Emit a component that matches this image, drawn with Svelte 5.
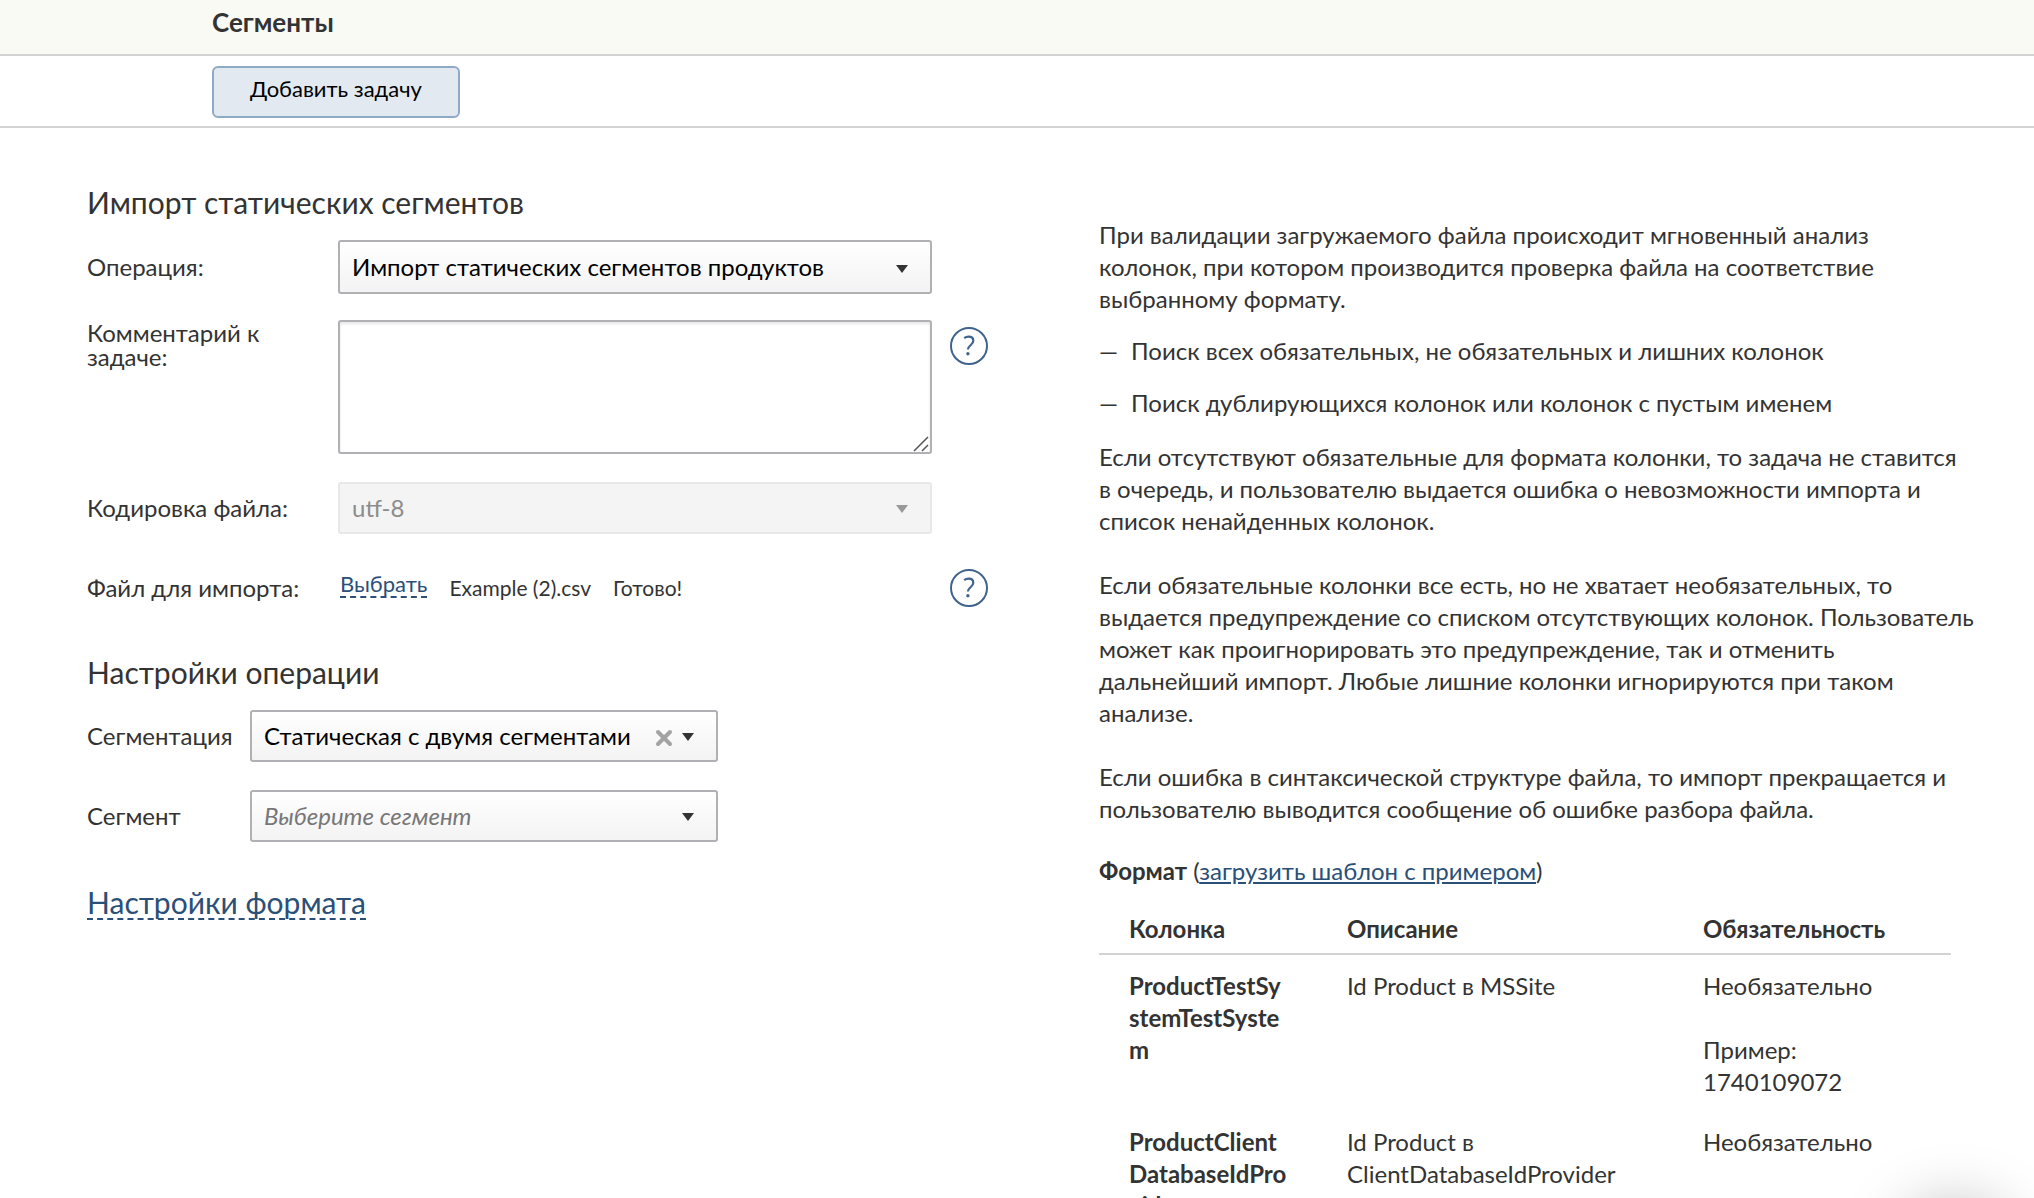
<script>
  let operation = $state('products');
  let comment = $state('');
  let encoding = $state('utf-8');
  let segmentation = $state('static-two');
  let segment = $state('');

  const checks = [
    'Поиск всех обязательных, не обязательных и лишних колонок',
    'Поиск дублирующихся колонок или колонок с пустым именем',
  ];

  const notes = [
    'Если отсутствуют обязательные для формата колонки, то задача не ставится в\u00a0очередь, и пользователю выдается ошибка о невозможности импорта и список ненайденных колонок.',
    'Если обязательные колонки все есть, но не хватает необязательных, то выдается предупреждение со списком отсутствующих колонок. Пользователь может как проигнорировать это предупреждение, так и отменить дальнейший импорт. Любые лишние колонки игнорируются при таком анализе.',
    'Если ошибка в синтаксической структуре файла, то импорт прекращается и пользователю выводится сообщение об ошибке разбора файла.',
  ];

  const columns = [
    {
      name: 'ProductTestSystemTestSystem',
      desc: 'Id Product в MSSite',
      required: 'Необязательно',
      example: '1740109072',
    },
    {
      name: 'ProductClientDatabaseIdProvider',
      desc: 'Id Product в ClientDatabaseIdProvider',
      required: 'Необязательно',
      example: '1740109072',
    },
  ];
</script>

{#snippet arrow()}
  <svg class="arrow" width="12" height="8" viewBox="0 0 12 8" aria-hidden="true">
    <path d="M0 0h12L6 8z" fill="currentColor" />
  </svg>
{/snippet}

{#snippet help(label)}
  <button class="help" type="button" aria-label={label}>
    <svg width="38" height="38" viewBox="0 0 38 38" fill="none" stroke="currentColor">
      <circle cx="19" cy="19" r="18" stroke-width="2" />
      <path d="M14.2 11.2c1.3-1 2.8-1.5 4.4-1.5 3 0 4.7 1.6 4.7 4.1 0 4.3-5.4 4.6-5.4 8.8" stroke-width="2.2" />
      <circle cx="17.9" cy="26.7" r="1.7" fill="currentColor" stroke="none" />
    </svg>
  </button>
{/snippet}

<div class="page">
  <header class="header">
    <h1>Сегменты</h1>
  </header>

  <div class="actions">
    <button class="add" type="button">Добавить задачу</button>
  </div>

  <main class="main">
    <form class="form">
      <h2>Импорт статических сегментов</h2>

      <div class="row row-operation">
        <label for="operation">Операция:</label>
        <div class="select tall">
          <select id="operation" bind:value={operation}>
            <option value="products">Импорт статических сегментов продуктов</option>
          </select>
          {@render arrow()}
        </div>
      </div>

      <div class="row">
        <label class="label-top" for="comment">Комментарий к задаче:</label>
        <div class="area">
          <textarea id="comment" bind:value={comment}></textarea>
          <svg class="grip" width="16" height="16" viewBox="0 0 16 16" aria-hidden="true">
            <path d="M1 15L15 1M9 15l6-6" stroke="#555" stroke-width="1.5" />
          </svg>
        </div>
        <div class="help-top">{@render help('Справка: комментарий')}</div>
      </div>

      <div class="row">
        <label for="encoding">Кодировка файла:</label>
        <div class="select disabled">
          <select id="encoding" bind:value={encoding} disabled>
            <option value="utf-8">utf-8</option>
          </select>
          {@render arrow()}
        </div>
      </div>

      <div class="row row-file">
        <span>Файл для импорта:</span>
        <div class="file">
          <a class="dashed" href="#file">Выбрать</a>
          <span>Example (2).csv</span>
          <span>Готово!</span>
        </div>
        {@render help('Справка: файл')}
      </div>

      <h2 class="second">Настройки операции</h2>

      <div class="row row-segment">
        <label for="segmentation">Сегментация</label>
        <div class="select">
          <select id="segmentation" bind:value={segmentation}>
            <option value="static-two">Статическая с двумя сегментами</option>
          </select>
          <button class="clear" type="button" aria-label="Очистить">
            <svg width="18" height="18" viewBox="0 0 18 18">
              <path d="M3 3l12 12M15 3L3 15" stroke="#a3a3a3" stroke-width="4" stroke-linecap="round" />
            </svg>
          </button>
          {@render arrow()}
        </div>
      </div>

      <div class="row row-segment">
        <label for="segment">Сегмент</label>
        <div class="select">
          <select id="segment" class="placeholder" bind:value={segment}>
            <option value="">Выберите сегмент</option>
          </select>
          {@render arrow()}
        </div>
      </div>

      <div class="format-settings">
        <a class="dashed" href="#format">Настройки формата</a>
      </div>
    </form>

    <section class="info">
      <p>
        При валидации загружаемого файла происходит мгновенный анализ колонок, при котором
        производится проверка файла на соответствие выбранному формату.
      </p>
      <ul>
        {#each checks as check}
          <li>{check}</li>
        {/each}
      </ul>
      <div class="notes">
        {#each notes as note}
          <p>{note}</p>
        {/each}
      </div>

      <p><b>Формат</b> (<a href="#template">загрузить шаблон с примером</a>)</p>

      <table>
        <thead>
          <tr>
            <th class="col-name">Колонка</th>
            <th class="col-desc">Описание</th>
            <th>Обязательность</th>
          </tr>
        </thead>
        <tbody>
          {#each columns as column}
            <tr>
              <td class="name">{column.name}</td>
              <td>{column.desc}</td>
              <td>{column.required}<br /><br />Пример:<br />{column.example}</td>
            </tr>
          {/each}
        </tbody>
      </table>
    </section>
  </main>

  <div class="widget"></div>
</div>

<style>
  :global(body) {
    margin: 0;
    background: #fff;
  }

  .page {
    position: relative;
    height: 100vh;
    overflow: hidden;
    font-family: Lato, 'Noto Sans', sans-serif;
    font-size: 24px;
    line-height: 32px;
    color: #333;
  }

  .page * {
    box-sizing: border-box;
  }

  button,
  select,
  textarea {
    font: inherit;
  }

  .header {
    height: 56px;
    padding: 6px 212px;
    background: #fafaf5;
    border-bottom: 2px solid #d3d3d3;
  }

  h1 {
    margin: 0;
    font-size: 26px;
    font-weight: 700;
    line-height: 32px;
  }

  .actions {
    height: 72px;
    padding: 10px 212px;
    border-bottom: 2px solid #d3d3d3;
  }

  .add {
    display: block;
    height: 52px;
    padding: 0 36px 6px;
    font-size: 22px;
    color: #000;
    background: #e2e9f0;
    border: 2px solid #8faac4;
    border-radius: 6px;
  }

  .main {
    display: grid;
    grid-template-columns: 901fr 852fr;
    gap: 111px;
    padding: 54px 83px 0 87px;
  }

  h2 {
    margin: 0 0 18px;
    font-size: 30px;
    font-weight: 400;
    line-height: 40px;
  }

  .second {
    margin-top: 38px;
  }

  .row {
    display: grid;
    grid-template-columns: 233px 1fr 38px;
    column-gap: 18px;
    align-items: center;
    margin-bottom: 28px;
  }

  .row-operation {
    margin-bottom: 26px;
  }

  .row-segment {
    grid-template-columns: 145px 468px;
  }

  .label-top {
    align-self: start;
    line-height: 24px;
    padding: 1px 50px 0 0;
  }

  .select {
    position: relative;
    height: 52px;
  }

  .tall {
    height: 54px;
  }

  select {
    display: block;
    width: 100%;
    height: 100%;
    padding: 0 60px 0 12px;
    color: #000;
    background: linear-gradient(#fff, #f3f3f3);
    border: 2px solid #b0b0b5;
    border-radius: 3px;
    appearance: none;
  }

  .placeholder {
    color: #777;
    font-style: italic;
  }

  .arrow {
    position: absolute;
    top: 23px;
    right: 24px;
    pointer-events: none;
  }

  .tall .arrow {
    top: 25px;
  }

  .disabled {
    color: #999;
  }

  .disabled select {
    color: #8c8c8c;
    background: #f4f4f4;
    border-color: #e8e8e8;
    opacity: 1;
  }

  .clear {
    position: absolute;
    top: 19px;
    right: 45px;
    display: flex;
    padding: 0;
    background: none;
    border: 0;
  }

  .area {
    position: relative;
  }

  textarea {
    display: block;
    width: 100%;
    height: 134px;
    padding: 8px 12px;
    background: #fff;
    border: 2px solid #b0b0b5;
    border-radius: 3px;
    box-shadow: inset 0 2px 3px rgba(0, 0, 0, 0.1);
    resize: vertical;
  }

  textarea::-webkit-resizer {
    display: none;
  }

  .grip {
    position: absolute;
    right: 3px;
    bottom: 2px;
    pointer-events: none;
  }

  .help {
    display: block;
    padding: 0;
    color: #3f638c;
    background: none;
    border: 0;
  }

  .help svg {
    display: block;
  }

  .help-top {
    align-self: start;
    padding-top: 7px;
  }

  .row-file {
    height: 52px;
  }

  .file {
    display: flex;
    gap: 22px;
    align-items: center;
    padding-left: 2px;
    font-size: 21px;
  }

  a {
    color: #2a5078;
  }

  .dashed {
    text-decoration: none;
    border-bottom: 2px dashed #2a5078;
  }

  .file .dashed {
    margin-bottom: 6px;
    font-size: 22px;
    line-height: 24px;
  }

  .format-settings {
    padding-top: 12px;
    font-size: 30px;
    line-height: 40px;
  }

  .format-settings .dashed {
    display: inline-block;
    line-height: 32px;
  }

  .info {
    padding-top: 37px;
  }

  p {
    margin: 0;
  }

  ul {
    margin: 20px 0 22px;
    padding: 0;
    list-style: none;
  }

  li {
    display: flex;
  }

  li + li {
    margin-top: 20px;
  }

  li::before {
    content: '—';
    width: 32px;
    flex: none;
  }

  .notes {
    display: grid;
    gap: 32px;
    margin: 0 -26px 30px 0;
  }

  table {
    width: 100%;
    margin-top: 26px;
    border-collapse: collapse;
    table-layout: fixed;
  }

  th {
    padding: 0 30px 8px;
    font-weight: 700;
    text-align: left;
    border-bottom: 2px solid #d3d3d3;
  }

  td {
    padding: 15px 30px 13px;
    vertical-align: top;
  }

  .col-name {
    width: 218px;
  }

  .col-desc {
    width: 356px;
  }

  .name {
    font-weight: 700;
    overflow-wrap: break-word;
  }

  .widget {
    position: absolute;
    right: 19px;
    bottom: -124px;
    width: 120px;
    height: 120px;
    border-radius: 50%;
    box-shadow: 0 0 60px rgba(0, 0, 0, 0.25);
  }
</style>
